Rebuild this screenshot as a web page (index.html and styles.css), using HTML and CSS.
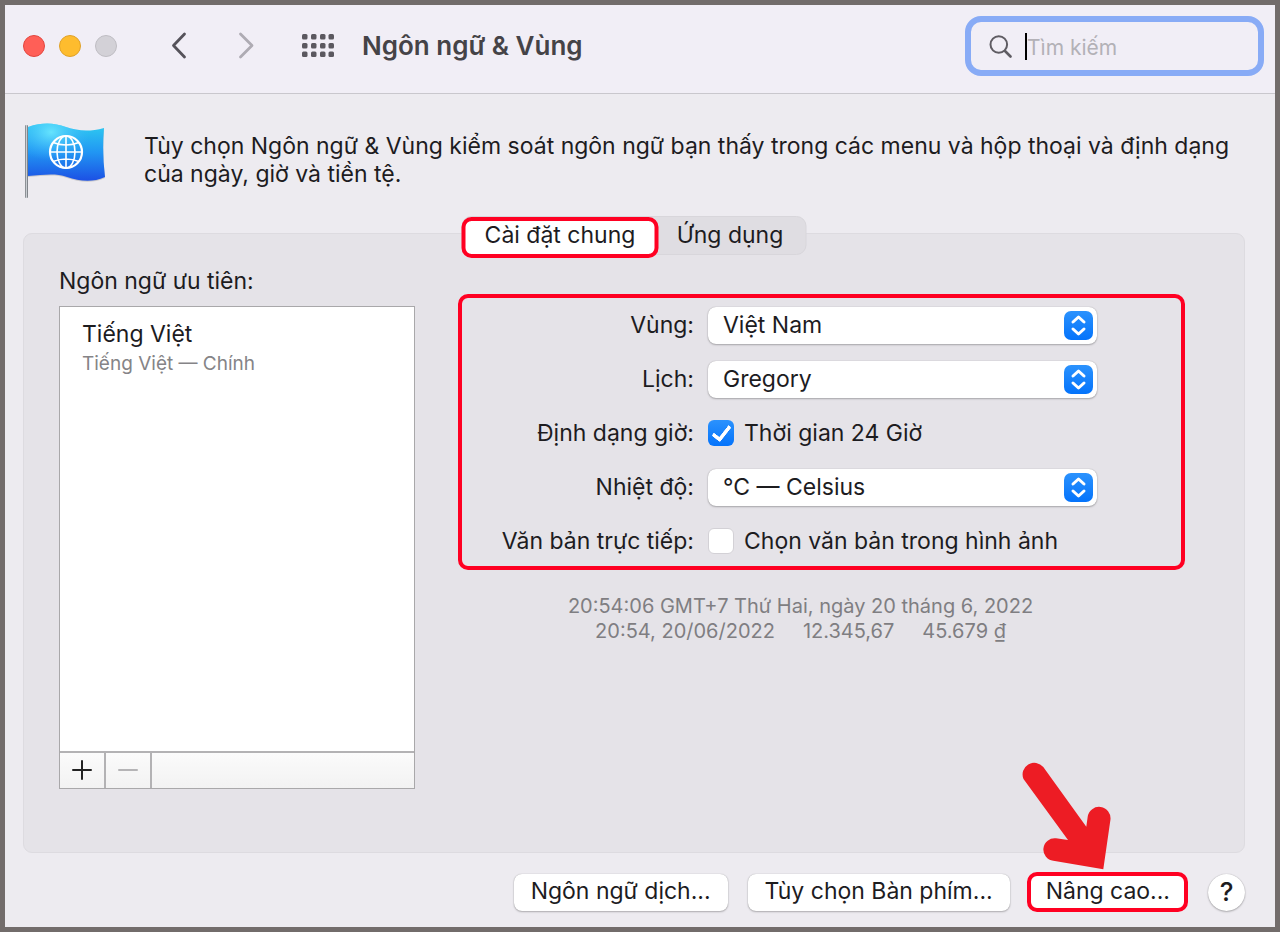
FILE: index.html
```html
<!DOCTYPE html>
<html lang="vi">
<head>
  <meta charset="UTF-8">
  <title>Ngôn ngữ &amp; Vùng</title>
  <link rel="stylesheet" href="styles.css">
</head>
<body>
  <div class="window">
    <header class="toolbar">
      <div class="lights">
        <button type="button" class="light red" aria-label="Đóng"></button>
        <button type="button" class="light yellow" aria-label="Thu nhỏ"></button>
        <button type="button" class="light gray" aria-label="Phóng to" disabled></button>
      </div>
      <div class="nav">
        <button type="button" class="icon-button" aria-label="Quay lại">
          <svg width="18" height="28" viewBox="0 0 18 28"><path d="M15.500 2 4.500 13.500 15.500 25" fill="none" stroke="#55525a" stroke-width="2.800" stroke-linecap="round" stroke-linejoin="round"/></svg>
        </button>
        <button type="button" class="icon-button" aria-label="Tiếp" disabled>
          <svg width="18" height="28" viewBox="0 0 18 28"><path d="M3.500 2 15 13.500 3.500 25" fill="none" stroke="#aeabb3" stroke-width="2.800" stroke-linecap="round" stroke-linejoin="round"/></svg>
        </button>
      </div>
      <button type="button" class="icon-button" aria-label="Hiển thị tất cả">
        <svg width="33" height="24" viewBox="0 0 33 24" fill="#5b585f">
          <rect x="0" y="0" width="5.500" height="5.500" rx="1.500"/><rect x="9" y="0" width="5.500" height="5.500" rx="1.500"/><rect x="18" y="0" width="5.500" height="5.500" rx="1.500"/><rect x="26.500" y="0" width="5.500" height="5.500" rx="1.500"/>
          <rect x="0" y="9" width="5.500" height="5.500" rx="1.500"/><rect x="9" y="9" width="5.500" height="5.500" rx="1.500"/><rect x="18" y="9" width="5.500" height="5.500" rx="1.500"/><rect x="26.500" y="9" width="5.500" height="5.500" rx="1.500"/>
          <rect x="0" y="17.500" width="5.500" height="5.500" rx="1.500"/><rect x="9" y="17.500" width="5.500" height="5.500" rx="1.500"/><rect x="18" y="17.500" width="5.500" height="5.500" rx="1.500"/><rect x="26.500" y="17.500" width="5.500" height="5.500" rx="1.500"/>
        </svg>
      </button>
      <h1>Ngôn ngữ &amp; Vùng</h1>
      <label class="search">
        <svg width="24" height="24" viewBox="0 0 24 24" fill="none" stroke="#5f5c63" stroke-linecap="round"><circle cx="9.800" cy="10.500" r="8.300" stroke-width="2"/><path d="M16 17 21.500 22.500" stroke-width="2.600"/></svg>
        <span class="caret"></span>
        <input type="text" placeholder="Tìm kiếm" aria-label="Tìm kiếm">
      </label>
    </header>

    <div class="intro">
      <svg class="flag" width="84" height="80" viewBox="0 0 84 80">
        <defs>
          <linearGradient id="cloth" x1="0" y1="0" x2="0" y2="1">
            <stop offset="0" stop-color="#2fcdf0"/>
            <stop offset="0.500" stop-color="#2196f3"/>
            <stop offset="1" stop-color="#1c50e4"/>
          </linearGradient>
          <radialGradient id="shine" cx="0.300" cy="0.150" r="0.500">
            <stop offset="0" stop-color="#6ce8ff" stop-opacity="0.900"/>
            <stop offset="1" stop-color="#3fb0ff" stop-opacity="0"/>
          </radialGradient>
          <linearGradient id="pole" x1="0" y1="0" x2="1" y2="0">
            <stop offset="0" stop-color="#6f7378"/>
            <stop offset="0.500" stop-color="#c9cdd2"/>
            <stop offset="1" stop-color="#5d6167"/>
          </linearGradient>
        </defs>
        <path d="M5 5C20 0 31 0 43 4S66 9 81 5Q79 30 82 54C69 60 56 58 44 54S21 52 5 53Z" fill="#777" opacity="0.300" transform="translate(0 1)"/>
        <path d="M5 4C20-1 31 0 43 4S66 9 81 5Q79 30 82 54C69 60 56 58 44 54S21 52 5 53Z" fill="url(#cloth)"/>
        <path d="M5 4C20-1 31 0 43 4S66 9 81 5Q79 30 82 54C69 60 56 58 44 54S21 52 5 53Z" fill="url(#shine)"/>
        <rect x="2" y="2" width="3" height="73" rx="1" fill="url(#pole)"/>
        <g fill="none" stroke="#fff" stroke-width="1.600">
          <circle cx="43" cy="29" r="16" stroke-width="2.200"/>
          <ellipse cx="43" cy="29" rx="9" ry="16"/>
          <path d="M43 13v32M27 29h32M30 19.500q13 5 26 0M30 38.500q13-5 26 0"/>
        </g>
      </svg>
      <p>Tùy chọn Ngôn ngữ &amp; Vùng kiểm soát ngôn ngữ bạn thấy trong các menu và hộp thoại và định dạng của ngày, giờ và tiền tệ.</p>
    </div>

    <main class="panel">
      <div class="tabs">
        <button type="button" class="tab active">Cài đặt chung</button>
        <button type="button" class="tab">Ứng dụng</button>
      </div>

      <section class="languages">
        <h2>Ngôn ngữ ưu tiên:</h2>
        <div class="list">
          <ul>
            <li>Tiếng Việt <small>Tiếng Việt — Chính</small></li>
          </ul>
          <div class="list-actions">
            <button type="button" aria-label="Thêm">
              <svg width="20" height="20" viewBox="0 0 20 20"><path d="M10 1v18M1 10h18" stroke="#222" stroke-width="2" stroke-linecap="round"/></svg>
            </button>
            <button type="button" aria-label="Xóa" disabled>
              <svg width="20" height="20" viewBox="0 0 20 20"><path d="M1 10h18" stroke="#b5b4b6" stroke-width="2" stroke-linecap="round"/></svg>
            </button>
          </div>
        </div>
      </section>

      <section class="settings">
        <form class="options">
          <label for="region">Vùng:</label>
          <div class="select">
            <select id="region"><option>Việt Nam</option></select>
            <svg width="29" height="29" viewBox="0 0 29 29"><path d="M9 11 14.500 6 20 11M9 18 14.500 23 20 18"/></svg>
          </div>

          <label for="calendar">Lịch:</label>
          <div class="select">
            <select id="calendar"><option>Gregory</option></select>
            <svg width="29" height="29" viewBox="0 0 29 29"><path d="M9 11 14.500 6 20 11M9 18 14.500 23 20 18"/></svg>
          </div>

          <span>Định dạng giờ:</span>
          <label class="check"><input type="checkbox" checked> Thời gian 24 Giờ</label>

          <label for="temperature">Nhiệt độ:</label>
          <div class="select">
            <select id="temperature"><option>°C — Celsius</option></select>
            <svg width="29" height="29" viewBox="0 0 29 29"><path d="M9 11 14.500 6 20 11M9 18 14.500 23 20 18"/></svg>
          </div>

          <span>Văn bản trực tiếp:</span>
          <label class="check"><input type="checkbox"> Chọn văn bản trong hình ảnh</label>
        </form>

        <div class="sample">
          <div>20:54:06 GMT+7 Thứ Hai, ngày 20 tháng 6, 2022</div>
          <div class="formats"><span>20:54, 20/06/2022</span><span>12.345,67</span><span>45.679 ₫</span></div>
        </div>
      </section>
    </main>

    <footer class="footer">
      <button type="button" class="button">Ngôn ngữ dịch...</button>
      <button type="button" class="button">Tùy chọn Bàn phím...</button>
      <div class="advanced">
        <button type="button" class="button marked">Nâng cao...</button>
        <svg class="arrow" width="92" height="110" viewBox="0 0 92 110"><path d="M3.500 19A11.700 11.700 0 0 1 23.300 7L66.300 66.700 67.700 56.700A11.450 11.450 0 0 1 90.400 60L83.300 109.300 33.300 100.700A11.250 11.250 0 0 1 36 78.300L48 80Z" fill="#ed1c24"/></svg>
      </div>
      <button type="button" class="help" aria-label="Trợ giúp">?</button>
    </footer>
  </div>
</body>
</html>
```
FILE: styles.css
```css
* {
  box-sizing: border-box;
}

body {
  margin: 0;
  font-family: Inter, "Liberation Sans", sans-serif;
  font-size: 23px;
  line-height: 28px;
  color: #1d1c1f;
}

h1, h2, p, ul {
  margin: 0;
  padding: 0;
}

button, input, select {
  margin: 0;
  padding: 0;
  border: none;
  background: none;
  font: inherit;
  color: inherit;
}

svg {
  display: block;
}

.window {
  display: flex;
  flex-direction: column;
  min-height: 100vh;
  border: 5px solid #726c6b;
  background-color: #edebf0;
}

/* Title bar */
.toolbar {
  display: flex;
  align-items: center;
  height: 89px;
  padding: 0 11px 6px 18px;
  background-color: #f1eef6;
  border-bottom: 1px solid #c9c7cd;
}

.lights {
  display: flex;
  gap: 14px;
}

.light {
  width: 22px;
  height: 22px;
  border-radius: 50%;
}

.red {
  background-color: #ff5f57;
  border: 1px solid #e2453e;
}

.yellow {
  background-color: #febc2e;
  border: 1px solid #e0a127;
}

.gray {
  background-color: #d3d1d7;
  border: 1px solid #bfbdc3;
}

.nav {
  display: flex;
  gap: 50px;
  margin: 0 47px 0 52px;
}

.toolbar h1 {
  margin-left: 27px;
  font-size: 26px;
  font-weight: 600;
  color: #454347;
}

.search {
  display: flex;
  align-items: center;
  width: 299px;
  height: 60px;
  margin-left: auto;
  padding-left: 18px;
  border: 6px solid #88abf6;
  border-radius: 16px;
}

.search .caret {
  width: 2px;
  height: 27px;
  margin-left: 12px;
  background-color: #000;
}

.search input {
  flex: 1;
  min-width: 0;
  padding-top: 3px;
  font-size: 21px;
  outline: none;
}

.search input::placeholder {
  color: #b3b1b7;
  opacity: 1;
}

/* Description */
.intro {
  display: flex;
  gap: 37px;
  padding: 29px 24px 0 18px;
}

.flag {
  flex: none;
}

.intro p {
  padding-top: 9px;
}

/* Main panel */
.panel {
  position: relative;
  flex: 1;
  display: flex;
  justify-content: space-between;
  margin: 30px 30px 0 18px;
  padding: 33px 59px 63px 35px;
  background-color: #e5e3e8;
  border: 1px solid #dddbe0;
  border-radius: 9px;
}

.tabs {
  position: absolute;
  top: -18px;
  left: 50%;
  display: flex;
  height: 39px;
  transform: translateX(-50%);
  background-color: #dfdde2;
  border: 1px solid #d8d6db;
  border-radius: 10px;
}

.tab {
  width: 147px;
  padding: 0 4px 2px 0;
}

.tab.active {
  width: 197px;
  height: 41px;
  margin-left: -1px;
  padding: 0 0 6px;
  background-color: #fff;
  border: 4px solid #ff0022;
  border-radius: 10px;
}

.languages {
  display: flex;
  flex-direction: column;
  width: 356px;
}

.languages h2 {
  margin-bottom: 11px;
  font-size: 23px;
  font-weight: 400;
}

.list {
  flex: 1;
  display: flex;
  flex-direction: column;
  border: 1px solid #a9a8aa;
  background-color: #fff;
}

.list ul {
  flex: 1;
  padding: 13px 22px;
  list-style-type: none;
}

.list small {
  display: block;
  margin-top: 2px;
  font-size: 19px;
  color: #858487;
}

.list-actions {
  display: flex;
  height: 37px;
  border-top: 2px solid #b3b2b4;
  background: linear-gradient(#fbfbfb, #f2f2f2);
}

.list-actions button {
  display: flex;
  align-items: center;
  justify-content: center;
  width: 46px;
  padding-bottom: 2px;
  border-right: 2px solid #b3b2b4;
}

.settings {
  width: 727px;
  padding-top: 27px;
}

.options {
  display: grid;
  grid-template-columns: 232px 389px;
  grid-auto-rows: 38px;
  gap: 16px 14px;
  align-items: center;
  padding: 8px 0 6px;
  border: 4px solid #ff0022;
  border-radius: 10px;
}

.options > label,
.options > span {
  text-align: right;
  white-space: nowrap;
}

.select {
  position: relative;
}

.select select {
  appearance: none;
  display: block;
  width: 100%;
  height: 37px;
  padding: 0 44px 1px 15px;
  background-color: #fff;
  border-radius: 8px;
  box-shadow: 0 0 1px rgba(0, 0, 0, 0.3), 0 1px 2px rgba(0, 0, 0, 0.25);
}

.select svg {
  position: absolute;
  top: 4px;
  right: 4px;
  border-radius: 7px;
  background: linear-gradient(#2b92fd, #0473fb);
  fill: none;
  stroke: #fff;
  stroke-width: 3px;
  stroke-linecap: round;
  stroke-linejoin: round;
  pointer-events: none;
}

.options .check {
  display: flex;
  align-items: center;
  gap: 10px;
  text-align: left;
}

.check input {
  appearance: none;
  display: flex;
  justify-content: center;
  align-items: flex-start;
  width: 26px;
  height: 26px;
  background-color: #fff;
  border: 1px solid #d3d1d6;
  border-radius: 6px;
}

.check input:checked {
  background: linear-gradient(#2b92fd, #0473fb);
  border: none;
}

.check input:checked::before {
  content: "";
  box-sizing: border-box;
  width: 11px;
  height: 19px;
  margin-top: 2px;
  border: solid #fff;
  border-width: 0 4px 4px 0;
  border-radius: 2px;
  transform: rotate(38deg);
}

.sample {
  padding: 24px 42px 0 0;
  font-size: 20px;
  line-height: 25px;
  text-align: center;
  color: #7f7e82;
}

.formats {
  display: flex;
  justify-content: center;
  gap: 28px;
}

/* Bottom buttons */
.footer {
  display: flex;
  justify-content: flex-end;
  align-items: center;
  gap: 20px;
  padding: 19px 30px 15px;
}

.button {
  height: 37px;
  padding: 0 17px 2px;
  background-color: #fff;
  border-radius: 8px;
  box-shadow: 0 0 1px rgba(0, 0, 0, 0.3), 0 1px 2px rgba(0, 0, 0, 0.25);
}

/* The red outline reaches past the button's own edge */
.advanced {
  position: relative;
  margin-left: -3px;
}

.button.marked {
  display: block;
  height: 40px;
  padding: 0 14px 2px 15px;
  border: 4px solid #ff0022;
  border-radius: 10px;
  box-shadow: none;
}

.arrow {
  position: absolute;
  right: 76px;
  bottom: 42px;
}

.help {
  width: 37px;
  height: 37px;
  background-color: #fff;
  border-radius: 50%;
  box-shadow: 0 0 1px rgba(0, 0, 0, 0.3), 0 1px 2px rgba(0, 0, 0, 0.25);
  font-size: 26px;
  font-weight: 500;
}
```
